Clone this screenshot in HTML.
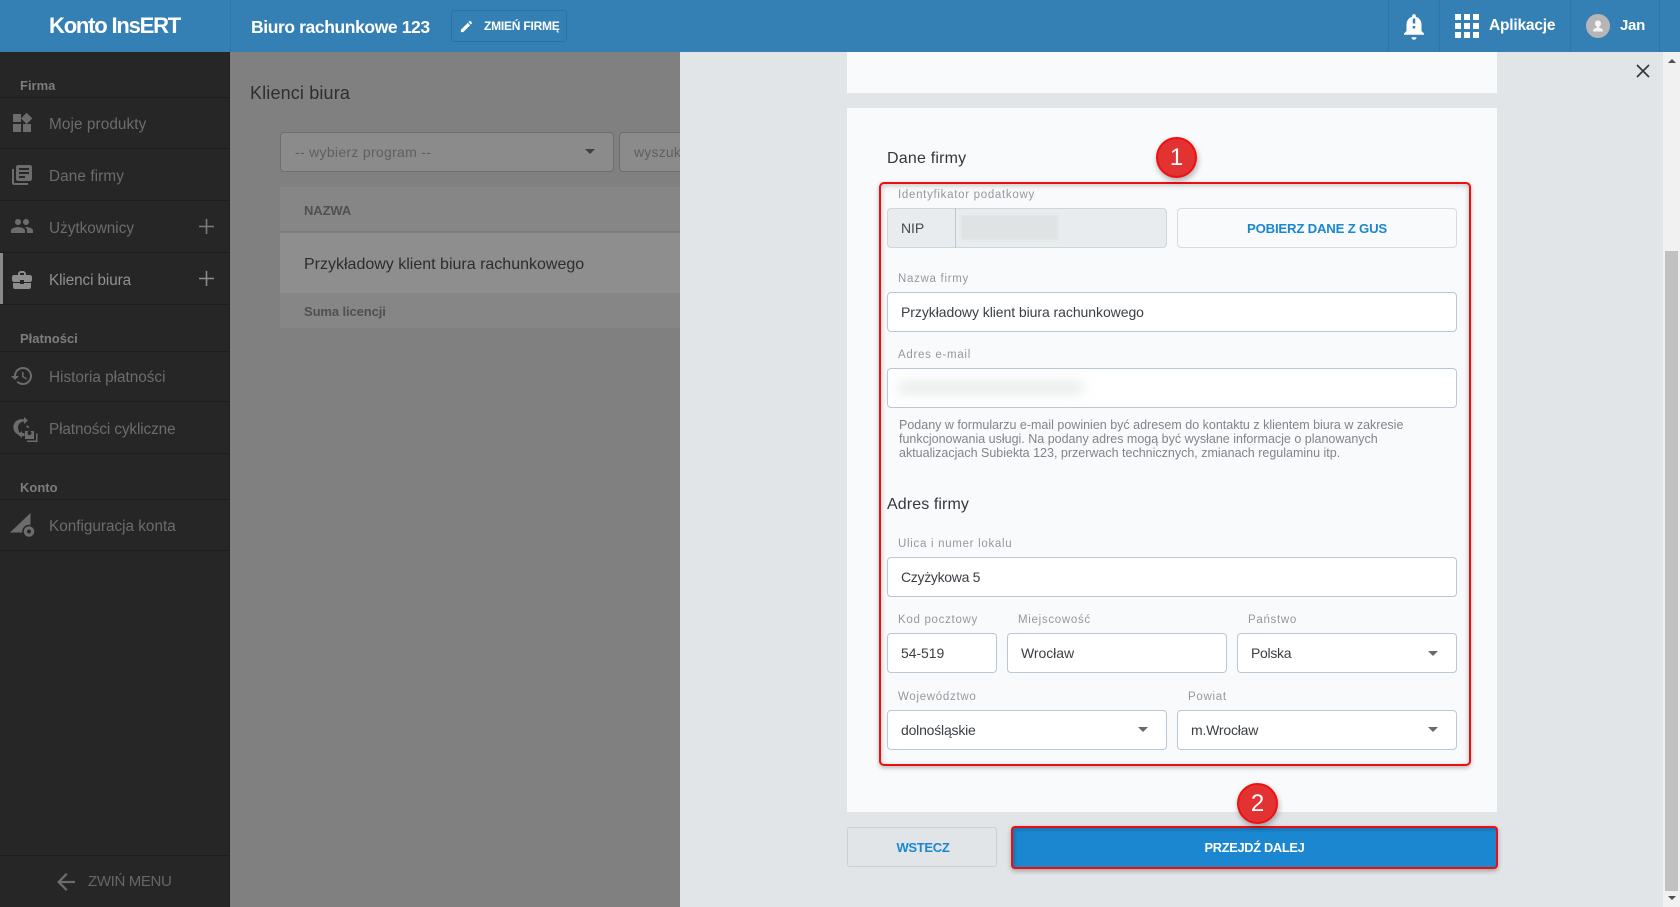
<!DOCTYPE html>
<html lang="pl"><head><meta charset="utf-8"><title>Konto InsERT</title>
<style>
*{box-sizing:border-box}
html,body{margin:0;padding:0;width:1680px;height:907px;overflow:hidden;background:#808080;font-family:"Liberation Sans",sans-serif}
.a{position:absolute}
.t{position:absolute;white-space:nowrap;line-height:20px;height:20px}
.line{position:absolute;left:0;width:230px;height:1px;background:#1e1e1e}
.side{color:#6c6c6c;font-size:15.3px;left:49px}
.sec{color:#7d7d7d;font-size:13px;font-weight:bold;left:20px}
.ic{position:absolute;fill:#6c6c6c}
.lb{color:#93999f;font-size:11.5px;letter-spacing:.7px}
.inp{position:absolute;background:#fff;border:1px solid #b9c8d4;border-radius:4px;height:40px}
.val{color:#3a3f44;font-size:14px;letter-spacing:-.06px}
.help{color:#7f858b;font-size:12.5px}
.caret{position:absolute;width:0;height:0;border-left:5px solid transparent;border-right:5px solid transparent;border-top:5px solid #666b70}
.bub{position:absolute;width:41px;height:41px;border-radius:50%;background:#e23232;border:2px solid #f01010;color:#fff;font-size:24px;line-height:37px;text-align:center;box-shadow:1px 3px 6px rgba(0,0,0,.3)}
</style></head><body>

<!-- header -->
<div class="a" style="left:0;top:0;width:1680px;height:52px;background:#3480b5"></div>
<div class="a" style="left:230px;top:0;width:1px;height:52px;background:#2f76a8"></div>
<div class="t" style="left:49px;top:16px;color:#fff;font-size:22px;font-weight:bold;letter-spacing:-1.2px">Konto InsERT</div>
<div class="t" style="left:251px;top:17px;color:#fff;font-size:17.5px;font-weight:bold;letter-spacing:-.4px">Biuro rachunkowe 123</div>
<div class="a" style="left:451px;top:10px;width:116px;height:32px;border:1px solid #2b71a3;border-radius:3px"></div>
<svg class="a" style="left:459px;top:19px;fill:#fff" width="15" height="15" viewBox="0 0 24 24"><path d="M3 17.25V21h3.75L17.81 9.94l-3.75-3.75L3 17.25zM20.71 7.04c.39-.39.39-1.02 0-1.41l-2.34-2.34c-.39-.39-1.02-.39-1.41 0l-1.83 1.83 3.75 3.75 1.83-1.83z"/></svg>
<div class="t" style="left:484px;top:16px;color:#fff;font-size:12px;font-weight:bold;letter-spacing:-.22px">ZMIEŃ FIRMĘ</div>
<div class="a" style="left:1388px;top:0;width:1px;height:52px;background:#2f76a8"></div>
<div class="a" style="left:1439px;top:0;width:1px;height:52px;background:#2f76a8"></div>
<div class="a" style="left:1570px;top:0;width:1px;height:52px;background:#2f76a8"></div>
<div class="a" style="left:1659px;top:0;width:1px;height:52px;background:#2f76a8"></div>
<svg class="a" style="left:1399px;top:11px;fill:#fff" width="30" height="30" viewBox="0 0 24 24"><path d="M10.01 21.01c0 1.1.89 1.99 1.99 1.99s1.99-.89 1.99-1.99h-3.98zM18 16v-5c0-3.07-1.63-5.64-4.5-6.32V4c0-.83-.67-1.5-1.5-1.5s-1.5.67-1.5 1.5v.68C7.64 5.36 6 7.92 6 11v5l-2 2v1h16v-1l-2-2zm-5-2h-2v-2h2v2zm0-4h-2V6h2v4z"/></svg>
<svg class="a" style="left:1455px;top:14px;fill:#fff" width="24" height="24" viewBox="0 0 24 24"><path d="M0 0h6v6H0zM9 0h6v6H9zM18 0h6v6h-6zM0 9h6v6H0zM9 9h6v6H9zM18 9h6v6h-6zM0 18h6v6H0zM9 18h6v6H9zM18 18h6v6h-6z"/></svg>
<div class="t" style="left:1489px;top:16px;color:#fff;font-size:15.5px;font-weight:bold;letter-spacing:-.2px">Aplikacje</div>
<svg class="a" style="left:1586px;top:14px" width="24" height="24" viewBox="0 0 24 24"><circle cx="12" cy="12" r="12" fill="#b6b6b6"/><path fill="#f4f4f4" d="M12 6.5c-1.9 0-3 1.3-3 3 0 1.4.8 2.5 1.8 3.2v1.2c-1.6.4-3.6 1-3.6 2.2V17.500h9.600v-1.400c0-1.200-2-1.800-3.600-2.200v-1.200c1-.7 1.800-1.800 1.800-3.200 0-1.700-1.100-3-3-3z"/></svg>
<div class="t" style="left:1620px;top:16px;color:#fff;font-size:15px;font-weight:bold;letter-spacing:-.3px">Jan</div>

<!-- sidebar -->
<div class="a" style="left:0;top:52px;width:230px;height:855px;background:#262626;border-right:1px solid #1f1f1f"></div>
<div class="a" style="left:0;top:253px;width:3px;height:51px;background:#8a8a8a"></div>
<div class="t sec" style="top:76px">Firma</div><div class="line" style="top:97px"></div>
<svg class="ic" style="left:10px;top:111px" width="24" height="24" viewBox="0 0 24 24"><path d="M13 13v8h8v-8h-8zM3 21h8v-8H3v8zM3 3v8h8V3H3zm13.66-1.31L11 7.34 16.66 13l5.66-5.66-5.660-5.650z"/></svg>
<div class="t side" style="top:115px;letter-spacing:.1px">Moje produkty</div><div class="line" style="top:148px"></div>
<svg class="ic" style="left:10px;top:163px" width="24" height="24" viewBox="0 0 24 24"><path d="M4 6H2v14c0 1.100.9 2 2 2h14v-2H4V6zm16-4H8c-1.100 0-2 .9-2 2v12c0 1.100.9 2 2 2h12c1.100 0 2-.9 2-2V4c0-1.100-.9-2-2-2zm-1 9H9V9h10v2zm-4 4H9v-2h6v2zm4-8H9V5h10v2z"/></svg>
<div class="t side" style="top:167px;letter-spacing:.1px">Dane firmy</div><div class="line" style="top:200px"></div>
<svg class="ic" style="left:10px;top:214px" width="24" height="24" viewBox="0 0 24 24"><path d="M16 11c1.660 0 2.990-1.340 2.990-3S17.660 5 16 5c-1.660 0-3 1.340-3 3s1.340 3 3 3zm-8 0c1.660 0 2.990-1.340 2.990-3S9.660 5 8 5C6.340 5 5 6.340 5 8s1.340 3 3 3zm0 2c-2.330 0-7 1.170-7 3.500V19h14v-2.500c0-2.330-4.670-3.500-7-3.500zm8 0c-.29 0-.62.02-.97.05 1.160.84 1.970 1.970 1.970 3.450V19h6v-2.500c0-2.330-4.670-3.500-7-3.500z"/></svg>
<div class="t side" style="top:219px">Użytkownicy</div><div class="line" style="top:252px"></div>
<svg class="a" style="left:199px;top:219px;fill:#7c7c7c" width="15" height="15" viewBox="0 0 15 15"><path d="M6.700 0h1.600v6.700H15v1.600H8.300V15H6.700V8.300H0V6.700h6.700z"/></svg>
<svg class="ic" style="left:10px;top:268px;fill:#8d8d8d" width="24" height="24" viewBox="0 0 24 24"><path d="M10 16v-1H3.010L3 19c0 1.110.89 2 2 2h14c1.110 0 2-.89 2-2v-4h-7v1h-4zm10-9h-4.010V5l-2-2h-4l-2 2v2H4c-1.100 0-2 .9-2 2v3c0 1.110.89 2 2 2h6v-2h4v2h6c1.100 0 2-.9 2-2V9c0-1.100-.9-2-2-2zm-6 0h-4V5h4v2z"/></svg>
<div class="t side" style="top:271px;color:#909090;letter-spacing:-.1px">Klienci biura</div><div class="line" style="top:304px"></div>
<svg class="a" style="left:199px;top:271px;fill:#8d8d8d" width="15" height="15" viewBox="0 0 15 15"><path d="M6.700 0h1.600v6.700H15v1.600H8.300V15H6.700V8.300H0V6.700h6.700z"/></svg>
<div class="t sec" style="top:329px">Płatności</div><div class="line" style="top:351px"></div>
<svg class="ic" style="left:10px;top:364px" width="24" height="24" viewBox="0 0 24 24"><path d="M13 3c-4.970 0-9 4.030-9 9H1l3.890 3.890.07.14L9 12H6c0-3.870 3.130-7 7-7s7 3.130 7 7-3.130 7-7 7c-1.930 0-3.680-.79-4.940-2.060l-1.420 1.420C8.270 19.990 10.510 21 13 21c4.970 0 9-4.030 9-9s-4.030-9-9-9zm-1 5v5l4.280 2.540.72-1.210-3.500-2.080V8H12z"/></svg>
<div class="t side" style="top:368px">Historia płatności</div><div class="line" style="top:401px"></div>
<svg class="ic" style="left:12px;top:416px" width="28" height="28" viewBox="0 0 28 28"><path d="M12 1l4 3.500-4 3.500V5.500A6 6 0 0 0 6.500 14c.2 1.500.9 2.700 1.800 3.600l-1.400 1.300A8 8 0 0 1 12 3.500zM14 10l1.900-.5c.6.600 1 1.200 1.300 1.900l-1.900.6c-.3-.7-.7-1.400-1.300-2z"/><path d="M6 18.500l4-3.500v2h2.500v3H10v2z"/><path d="M13 15h9v8h-9zm2.500 2a2 2 0 1 0 4 0 2 2 0 1 0-4 0z" fill-rule="evenodd"/><path d="M24 17.500h1.500V26H15v-1.500h9z"/></svg>
<div class="t side" style="top:420px;letter-spacing:-.1px">Płatności cykliczne</div><div class="line" style="top:453px"></div>
<div class="t sec" style="top:478px">Konto</div><div class="line" style="top:499px"></div>
<svg class="ic" style="left:10px;top:512px" width="26" height="26" viewBox="0 0 26 26"><path d="M20.500 1v19.500H0z"/><circle cx="19" cy="19.500" r="6" fill="#6c6c6c" stroke="#262626" stroke-width="1.500"/><circle cx="19" cy="19.500" r="2" fill="#262626"/></svg>
<div class="t side" style="top:517px">Konfiguracja konta</div><div class="line" style="top:550px"></div>
<div class="line" style="top:855px"></div>
<svg class="a" style="left:57px;top:873px;fill:#6c6c6c" width="18" height="18" viewBox="0 0 16 16"><path d="M16 7H3.830l5.590-5.590L8 0 0 8l8 8 1.410-1.410L3.830 9H16z"/></svg>
<div class="t side" style="left:88px;top:872px;font-size:15px;color:#666;letter-spacing:-.35px">ZWIŃ MENU</div>

<!-- dimmed content -->
<div class="t" style="left:250px;top:83px;color:#2e2e2e;font-size:18px;letter-spacing:.15px">Klienci biura</div>
<div class="a" style="left:280px;top:132px;width:334px;height:40px;background:#8b8b8b;border:1px solid #6e6e6e;border-radius:4px"></div>
<div class="t" style="left:295px;top:142px;color:#5f5f5f;font-size:14px;letter-spacing:.3px">-- wybierz program --</div>
<div class="caret" style="left:585px;top:149px;border-top-color:#404040"></div>
<div class="a" style="left:619px;top:132px;width:70px;height:40px;background:#8b8b8b;border:1px solid #6e6e6e;border-radius:4px"></div>
<div class="t" style="left:634px;top:142px;color:#5f5f5f;font-size:14px;letter-spacing:.2px">wyszukaj</div>
<div class="a" style="left:280px;top:187px;width:400px;height:45px;background:#868686;border-bottom:1px solid #7a7a7a"></div>
<div class="t" style="left:304px;top:201px;color:#505050;font-size:13px;font-weight:bold;letter-spacing:-.1px">NAZWA</div>
<div class="a" style="left:280px;top:233px;width:400px;height:60px;background:#8e8e8e"></div>
<div class="t" style="left:304px;top:255px;color:#2d2d2d;font-size:16px">Przykładowy klient biura rachunkowego</div>
<div class="a" style="left:280px;top:293px;width:400px;height:35px;background:#868686"></div>
<div class="t" style="left:304px;top:302px;color:#505050;font-size:13px;font-weight:bold;letter-spacing:-.1px">Suma licencji</div>

<!-- modal -->
<div class="a" style="left:680px;top:52px;width:983px;height:855px;background:#e1e5e8"></div>
<div class="a" style="left:1663px;top:52px;width:17px;height:855px;background:#f1f1f1"></div>
<div class="a" style="left:1665px;top:251px;width:13px;height:640px;background:#c1c1c1"></div>
<div class="a" style="left:1668px;top:59px;width:0;height:0;border-left:4px solid transparent;border-right:4px solid transparent;border-bottom:4px solid #505050"></div>
<div class="a" style="left:1668px;top:896px;width:0;height:0;border-left:4px solid transparent;border-right:4px solid transparent;border-top:4px solid #505050"></div>
<svg class="a" style="left:1636px;top:64px" width="14" height="14" viewBox="0 0 14 14"><path d="M1 1l12 12M13 1L1 13" stroke="#333" stroke-width="1.600" fill="none"/></svg>

<div class="a" style="left:847px;top:52px;width:650px;height:41px;background:#f9fafc"></div>
<div class="a" style="left:847px;top:108px;width:650px;height:704px;background:#f9fafc"></div>

<div class="a" style="left:879px;top:182px;width:592px;height:584px;border:2px solid #f00d0d;border-radius:5px;box-shadow:0 2px 5px rgba(0,0,0,.25),inset 0 3px 5px rgba(0,0,0,.12),inset 3px 0 4px rgba(0,0,0,.05),inset -3px 0 4px rgba(0,0,0,.05)"></div>

<div class="t" style="left:887px;top:149px;color:#32383e;font-size:16px;letter-spacing:.2px">Dane firmy</div>
<div class="t lb" style="left:898px;top:185px">Identyfikator podatkowy</div>
<div class="inp" style="left:887px;top:208px;width:280px;background:#e8ecee;border-color:#cfd6da"></div>
<div class="a" style="left:955px;top:208px;width:1px;height:40px;background:#bcc7cf"></div>
<div class="t val" style="left:901px;top:218px;color:#454a4f">NIP</div>
<div class="a" style="left:961px;top:215px;width:97px;height:25px;background:#e0e3e4;filter:blur(1px)"></div>
<div class="a" style="left:1177px;top:208px;width:280px;height:40px;background:#f9fafc;border:1px solid #d5dbe0;border-radius:4px"></div>
<div class="t" style="left:1177px;width:280px;text-align:center;top:219px;color:#1a87d0;font-size:13.2px;font-weight:bold;letter-spacing:-.2px">POBIERZ DANE Z GUS</div>

<div class="t lb" style="left:898px;top:269px">Nazwa firmy</div>
<div class="inp" style="left:887px;top:292px;width:570px"></div>
<div class="t val" style="left:901px;top:302px">Przykładowy klient biura rachunkowego</div>

<div class="t lb" style="left:898px;top:345px">Adres e-mail</div>
<div class="inp" style="left:887px;top:368px;width:570px"></div>
<div class="a" style="left:898px;top:381px;width:185px;height:13px;background:#e9ebec;filter:blur(6px)"></div>

<div class="t help" style="left:899px;top:415px">Podany w formularzu e-mail powinien być adresem do kontaktu z klientem biura w zakresie</div>
<div class="t help" style="left:899px;top:429px">funkcjonowania usługi. Na podany adres mogą być wysłane informacje o planowanych</div>
<div class="t help" style="left:899px;top:443px">aktualizacjach Subiekta 123, przerwach technicznych, zmianach regulaminu itp.</div>

<div class="t" style="left:887px;top:495px;color:#32383e;font-size:16px;letter-spacing:.1px">Adres firmy</div>

<div class="t lb" style="left:898px;top:534px">Ulica i numer lokalu</div>
<div class="inp" style="left:887px;top:557px;width:570px"></div>
<div class="t val" style="left:901px;top:567px;letter-spacing:-.3px">Czyżykowa 5</div>

<div class="t lb" style="left:898px;top:610px">Kod pocztowy</div>
<div class="t lb" style="left:1018px;top:610px">Miejscowość</div>
<div class="t lb" style="left:1248px;top:610px">Państwo</div>
<div class="inp" style="left:887px;top:633px;width:110px"></div>
<div class="t val" style="left:901px;top:643px">54-519</div>
<div class="inp" style="left:1007px;top:633px;width:220px"></div>
<div class="t val" style="left:1021px;top:643px">Wrocław</div>
<div class="inp" style="left:1237px;top:633px;width:220px"></div>
<div class="t val" style="left:1251px;top:643px;letter-spacing:-.3px">Polska</div>
<div class="caret" style="left:1428px;top:651px"></div>

<div class="t lb" style="left:898px;top:687px">Województwo</div>
<div class="t lb" style="left:1188px;top:687px">Powiat</div>
<div class="inp" style="left:887px;top:710px;width:280px"></div>
<div class="t val" style="left:901px;top:720px;letter-spacing:-.2px">dolnośląskie</div>
<div class="caret" style="left:1138px;top:727px"></div>
<div class="inp" style="left:1177px;top:710px;width:280px"></div>
<div class="t val" style="left:1191px;top:720px;letter-spacing:-.2px">m.Wrocław</div>
<div class="caret" style="left:1428px;top:727px"></div>

<div class="a" style="left:847px;top:827px;width:150px;height:40px;border:1px solid #c9d0d6;border-radius:3px;background:#e1e5e8"></div>
<div class="t" style="left:848px;width:150px;text-align:center;top:838px;color:#1a87d0;font-size:13px;font-weight:bold;letter-spacing:-.3px">WSTECZ</div>
<div class="a" style="left:1011px;top:826px;width:487px;height:43px;background:#1a87d0;border:2px solid #f00d0d;border-radius:4px;box-shadow:0 2px 5px rgba(0,0,0,.3),inset 2px 2px 3px rgba(0,0,0,.15)"></div>
<div class="t" style="left:1010px;width:489px;text-align:center;top:838px;color:#fff;font-size:12.8px;font-weight:bold;letter-spacing:-.3px">PRZEJDŹ DALEJ</div>

<div class="bub" style="left:1156px;top:137px">1</div>
<div class="bub" style="left:1237px;top:783px">2</div>
</body></html>
